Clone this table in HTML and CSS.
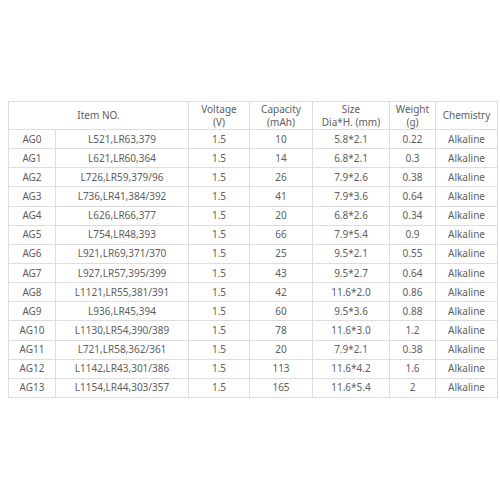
FILE: index.html
```html
<!DOCTYPE html>
<html>
<head>
<meta charset="utf-8">
<link rel="stylesheet" href="styles.css">
</head>
<body>
<div class="page">
<table class="spec">
<colgroup>
<col class="c1"><col class="c2"><col class="c3"><col class="c4"><col class="c5"><col class="c6"><col class="c7">
</colgroup>
<thead>
<tr class="head">
<th colspan="2">Item NO.</th>
<th>Voltage<br>(V)</th>
<th>Capacity<br>(mAh)</th>
<th>Size<br>Dia*H. (mm)</th>
<th>Weight<br>(g)</th>
<th>Chemistry</th>
</tr>
</thead>
<tbody>
<tr><td>AG0</td><td>L521,LR63,379</td><td>1.5</td><td>10</td><td>5.8*2.1</td><td>0.22</td><td>Alkaline</td></tr>
<tr><td>AG1</td><td>L621,LR60,364</td><td>1.5</td><td>14</td><td>6.8*2.1</td><td>0.3</td><td>Alkaline</td></tr>
<tr><td>AG2</td><td>L726,LR59,379/96</td><td>1.5</td><td>26</td><td>7.9*2.6</td><td>0.38</td><td>Alkaline</td></tr>
<tr><td>AG3</td><td>L736,LR41,384/392</td><td>1.5</td><td>41</td><td>7.9*3.6</td><td>0.64</td><td>Alkaline</td></tr>
<tr><td>AG4</td><td>L626,LR66,377</td><td>1.5</td><td>20</td><td>6.8*2.6</td><td>0.34</td><td>Alkaline</td></tr>
<tr><td>AG5</td><td>L754,LR48,393</td><td>1.5</td><td>66</td><td>7.9*5.4</td><td>0.9</td><td>Alkaline</td></tr>
<tr><td>AG6</td><td>L921,LR69,371/370</td><td>1.5</td><td>25</td><td>9.5*2.1</td><td>0.55</td><td>Alkaline</td></tr>
<tr><td>AG7</td><td>L927,LR57,395/399</td><td>1.5</td><td>43</td><td>9.5*2.7</td><td>0.64</td><td>Alkaline</td></tr>
<tr><td>AG8</td><td>L1121,LR55,381/391</td><td>1.5</td><td>42</td><td>11.6*2.0</td><td>0.86</td><td>Alkaline</td></tr>
<tr><td>AG9</td><td>L936,LR45,394</td><td>1.5</td><td>60</td><td>9.5*3.6</td><td>0.88</td><td>Alkaline</td></tr>
<tr><td>AG10</td><td>L1130,LR54,390/389</td><td>1.5</td><td>78</td><td>11.6*3.0</td><td>1.2</td><td>Alkaline</td></tr>
<tr><td>AG11</td><td>L721,LR58,362/361</td><td>1.5</td><td>20</td><td>7.9*2.1</td><td>0.38</td><td>Alkaline</td></tr>
<tr><td>AG12</td><td>L1142,LR43,301/386</td><td>1.5</td><td>113</td><td>11.6*4.2</td><td>1.6</td><td>Alkaline</td></tr>
<tr><td>AG13</td><td>L1154,LR44,303/357</td><td>1.5</td><td>165</td><td>11.6*5.4</td><td>2</td><td>Alkaline</td></tr>
</tbody>
</table>
</div>
</body>
</html>
```
FILE: styles.css
```css
html, body {
  margin: 0;
  padding: 0;
  background: #ffffff;
}
.page {
  padding: 101px 0 0 8px;
}
.spec {
  border-collapse: collapse;
  table-layout: fixed;
  width: 489px;
  font-family: "Noto Sans", "Liberation Sans", sans-serif;
  font-size: 10px;
  color: #606060;
}
.c1 { width: 47px; }
.c2 { width: 133px; }
.c3 { width: 61px; }
.c4 { width: 63px; }
.c5 { width: 77px; }
.c6 { width: 46px; }
.c7 { width: 62px; }
.spec th, .spec td {
  border: 1px solid #dddddd;
  padding: 0;
  text-align: center;
  font-weight: normal;
  white-space: nowrap;
}
.spec th {
  line-height: 13px;
}
.head {
  height: 28px;
}
.spec tbody tr {
  height: 19.15px;
}
.spec td {
  line-height: 17px;
}
```
